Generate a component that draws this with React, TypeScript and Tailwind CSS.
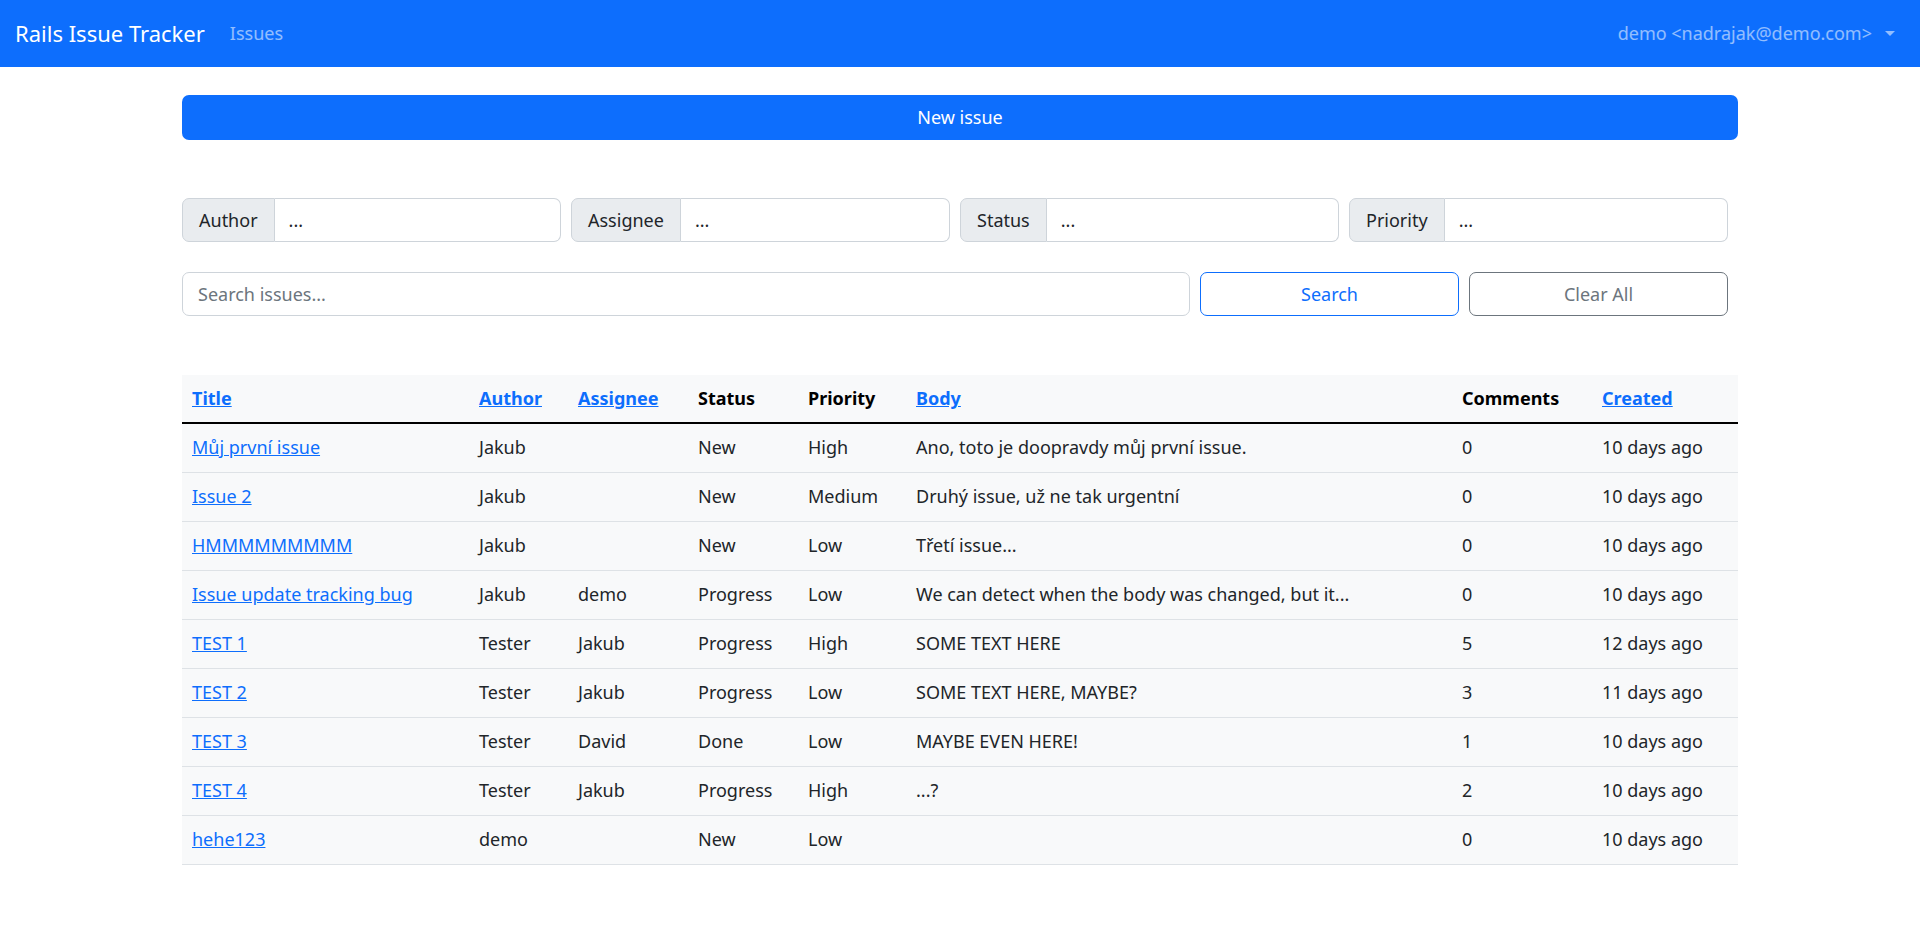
import React from 'react';

type Issue = {
    title: string;
    author: string;
    assignee: string;
    status: string;
    priority: string;
    body: string;
    comments: number;
    created: string;
};

const issues: Issue[] = [
    { title: 'Můj první issue', author: 'Jakub', assignee: '', status: 'New', priority: 'High', body: 'Ano, toto je doopravdy můj první issue.', comments: 0, created: '10 days ago' },
    { title: 'Issue 2', author: 'Jakub', assignee: '', status: 'New', priority: 'Medium', body: 'Druhý issue, už ne tak urgentní', comments: 0, created: '10 days ago' },
    { title: 'HMMMMMMMMM', author: 'Jakub', assignee: '', status: 'New', priority: 'Low', body: 'Třetí issue...', comments: 0, created: '10 days ago' },
    { title: 'Issue update tracking bug', author: 'Jakub', assignee: 'demo', status: 'Progress', priority: 'Low', body: 'We can detect when the body was changed, but it...', comments: 0, created: '10 days ago' },
    { title: 'TEST 1', author: 'Tester', assignee: 'Jakub', status: 'Progress', priority: 'High', body: 'SOME TEXT HERE', comments: 5, created: '12 days ago' },
    { title: 'TEST 2', author: 'Tester', assignee: 'Jakub', status: 'Progress', priority: 'Low', body: 'SOME TEXT HERE, MAYBE?', comments: 3, created: '11 days ago' },
    { title: 'TEST 3', author: 'Tester', assignee: 'David', status: 'Done', priority: 'Low', body: 'MAYBE EVEN HERE!', comments: 1, created: '10 days ago' },
    { title: 'TEST 4', author: 'Tester', assignee: 'Jakub', status: 'Progress', priority: 'High', body: '...?', comments: 2, created: '10 days ago' },
    { title: 'hehe123', author: 'demo', assignee: '', status: 'New', priority: 'Low', body: '', comments: 0, created: '10 days ago' },
];

const FilterGroup = ({ label }: { label: string }) => (
    <div className="pr-[10px]">
        <div className="flex h-[44px]">
            <span className="flex items-center px-[16px] bg-[#e9ecef] border border-[#ced4da] rounded-l-[7px] text-[#212529]">
                {label}
            </span>
            <div className="flex-1 flex items-center px-[14px] border border-l-0 border-[#ced4da] rounded-r-[7px] bg-white text-[#212529]">
                ...
            </div>
        </div>
    </div>
);

const App = () => {
    return (
        <div className="min-h-screen bg-white text-[18px] leading-[1.5] text-[#212529] font-['Noto_Sans',sans-serif]">
            {/* Navbar */}
            <nav className="h-[67px] bg-[#0d6efd] flex items-center justify-between pl-[15px] pr-[25px]">
                <div className="flex items-center">
                    <a className="text-white text-[22px] mr-[25px] cursor-pointer">Rails Issue Tracker</a>
                    <a className="text-white/55 cursor-pointer">Issues</a>
                </div>
                <div className="flex items-center text-white/55 cursor-pointer">
                    <span>demo &lt;nadrajak@demo.com&gt;</span>
                    <span className="ml-[13px] w-0 h-0 border-x-[5px] border-x-transparent border-t-[5px] border-t-white/55"></span>
                </div>
            </nav>

            <main className="w-[1556px] mx-auto pt-[28px] pb-10">
                <button className="w-full h-[45px] rounded-[7px] bg-[#0d6efd] text-white">
                    New issue
                </button>

                {/* Filters */}
                <div className="grid grid-cols-4 mt-[58px]">
                    <FilterGroup label="Author" />
                    <FilterGroup label="Assignee" />
                    <FilterGroup label="Status" />
                    <FilterGroup label="Priority" />
                </div>

                {/* Search row */}
                <div className="flex gap-[10px] pr-[10px] mt-[30px]">
                    <input
                        className="flex-1 h-[44px] px-[15px] border border-[#ced4da] rounded-[7px] outline-none placeholder:text-[#6c757d]"
                        placeholder="Search issues..."
                    />
                    <button className="w-[259px] h-[44px] border border-[#0d6efd] text-[#0d6efd] rounded-[7px] bg-white">
                        Search
                    </button>
                    <button className="w-[259px] h-[44px] border border-[#6c757d] text-[#6c757d] rounded-[7px] bg-white">
                        Clear All
                    </button>
                </div>

                {/* Issues table */}
                <table className="w-full table-fixed border-collapse mt-[59px] bg-[#f8f9fa]">
                    <thead>
                        <tr className="h-[48px] text-black font-bold">
                            <th className="w-[287px] px-[10px] text-left"><a className="text-[#0d6efd] underline">Title</a></th>
                            <th className="w-[99px] px-[10px] text-left"><a className="text-[#0d6efd] underline">Author</a></th>
                            <th className="w-[120px] px-[10px] text-left"><a className="text-[#0d6efd] underline">Assignee</a></th>
                            <th className="w-[110px] px-[10px] text-left">Status</th>
                            <th className="w-[108px] px-[10px] text-left">Priority</th>
                            <th className="w-[546px] px-[10px] text-left"><a className="text-[#0d6efd] underline">Body</a></th>
                            <th className="w-[140px] px-[10px] text-left">Comments</th>
                            <th className="w-[146px] px-[10px] text-left"><a className="text-[#0d6efd] underline">Created</a></th>
                        </tr>
                    </thead>
                    <tbody className="border-t-2 border-black">
                        {issues.map((issue) => (
                            <tr key={issue.title} className="h-[49px] border-b border-[#dee2e6] text-[#212529]">
                                <td className="px-[10px] whitespace-nowrap"><a className="text-[#0d6efd] underline cursor-pointer">{issue.title}</a></td>
                                <td className="px-[10px]">{issue.author}</td>
                                <td className="px-[10px]">{issue.assignee}</td>
                                <td className="px-[10px]">{issue.status}</td>
                                <td className="px-[10px]">{issue.priority}</td>
                                <td className="px-[10px] whitespace-nowrap">{issue.body}</td>
                                <td className="px-[10px]">{issue.comments}</td>
                                <td className="px-[10px] whitespace-nowrap">{issue.created}</td>
                            </tr>
                        ))}
                    </tbody>
                </table>
            </main>
        </div>
    );
};

export default App;
